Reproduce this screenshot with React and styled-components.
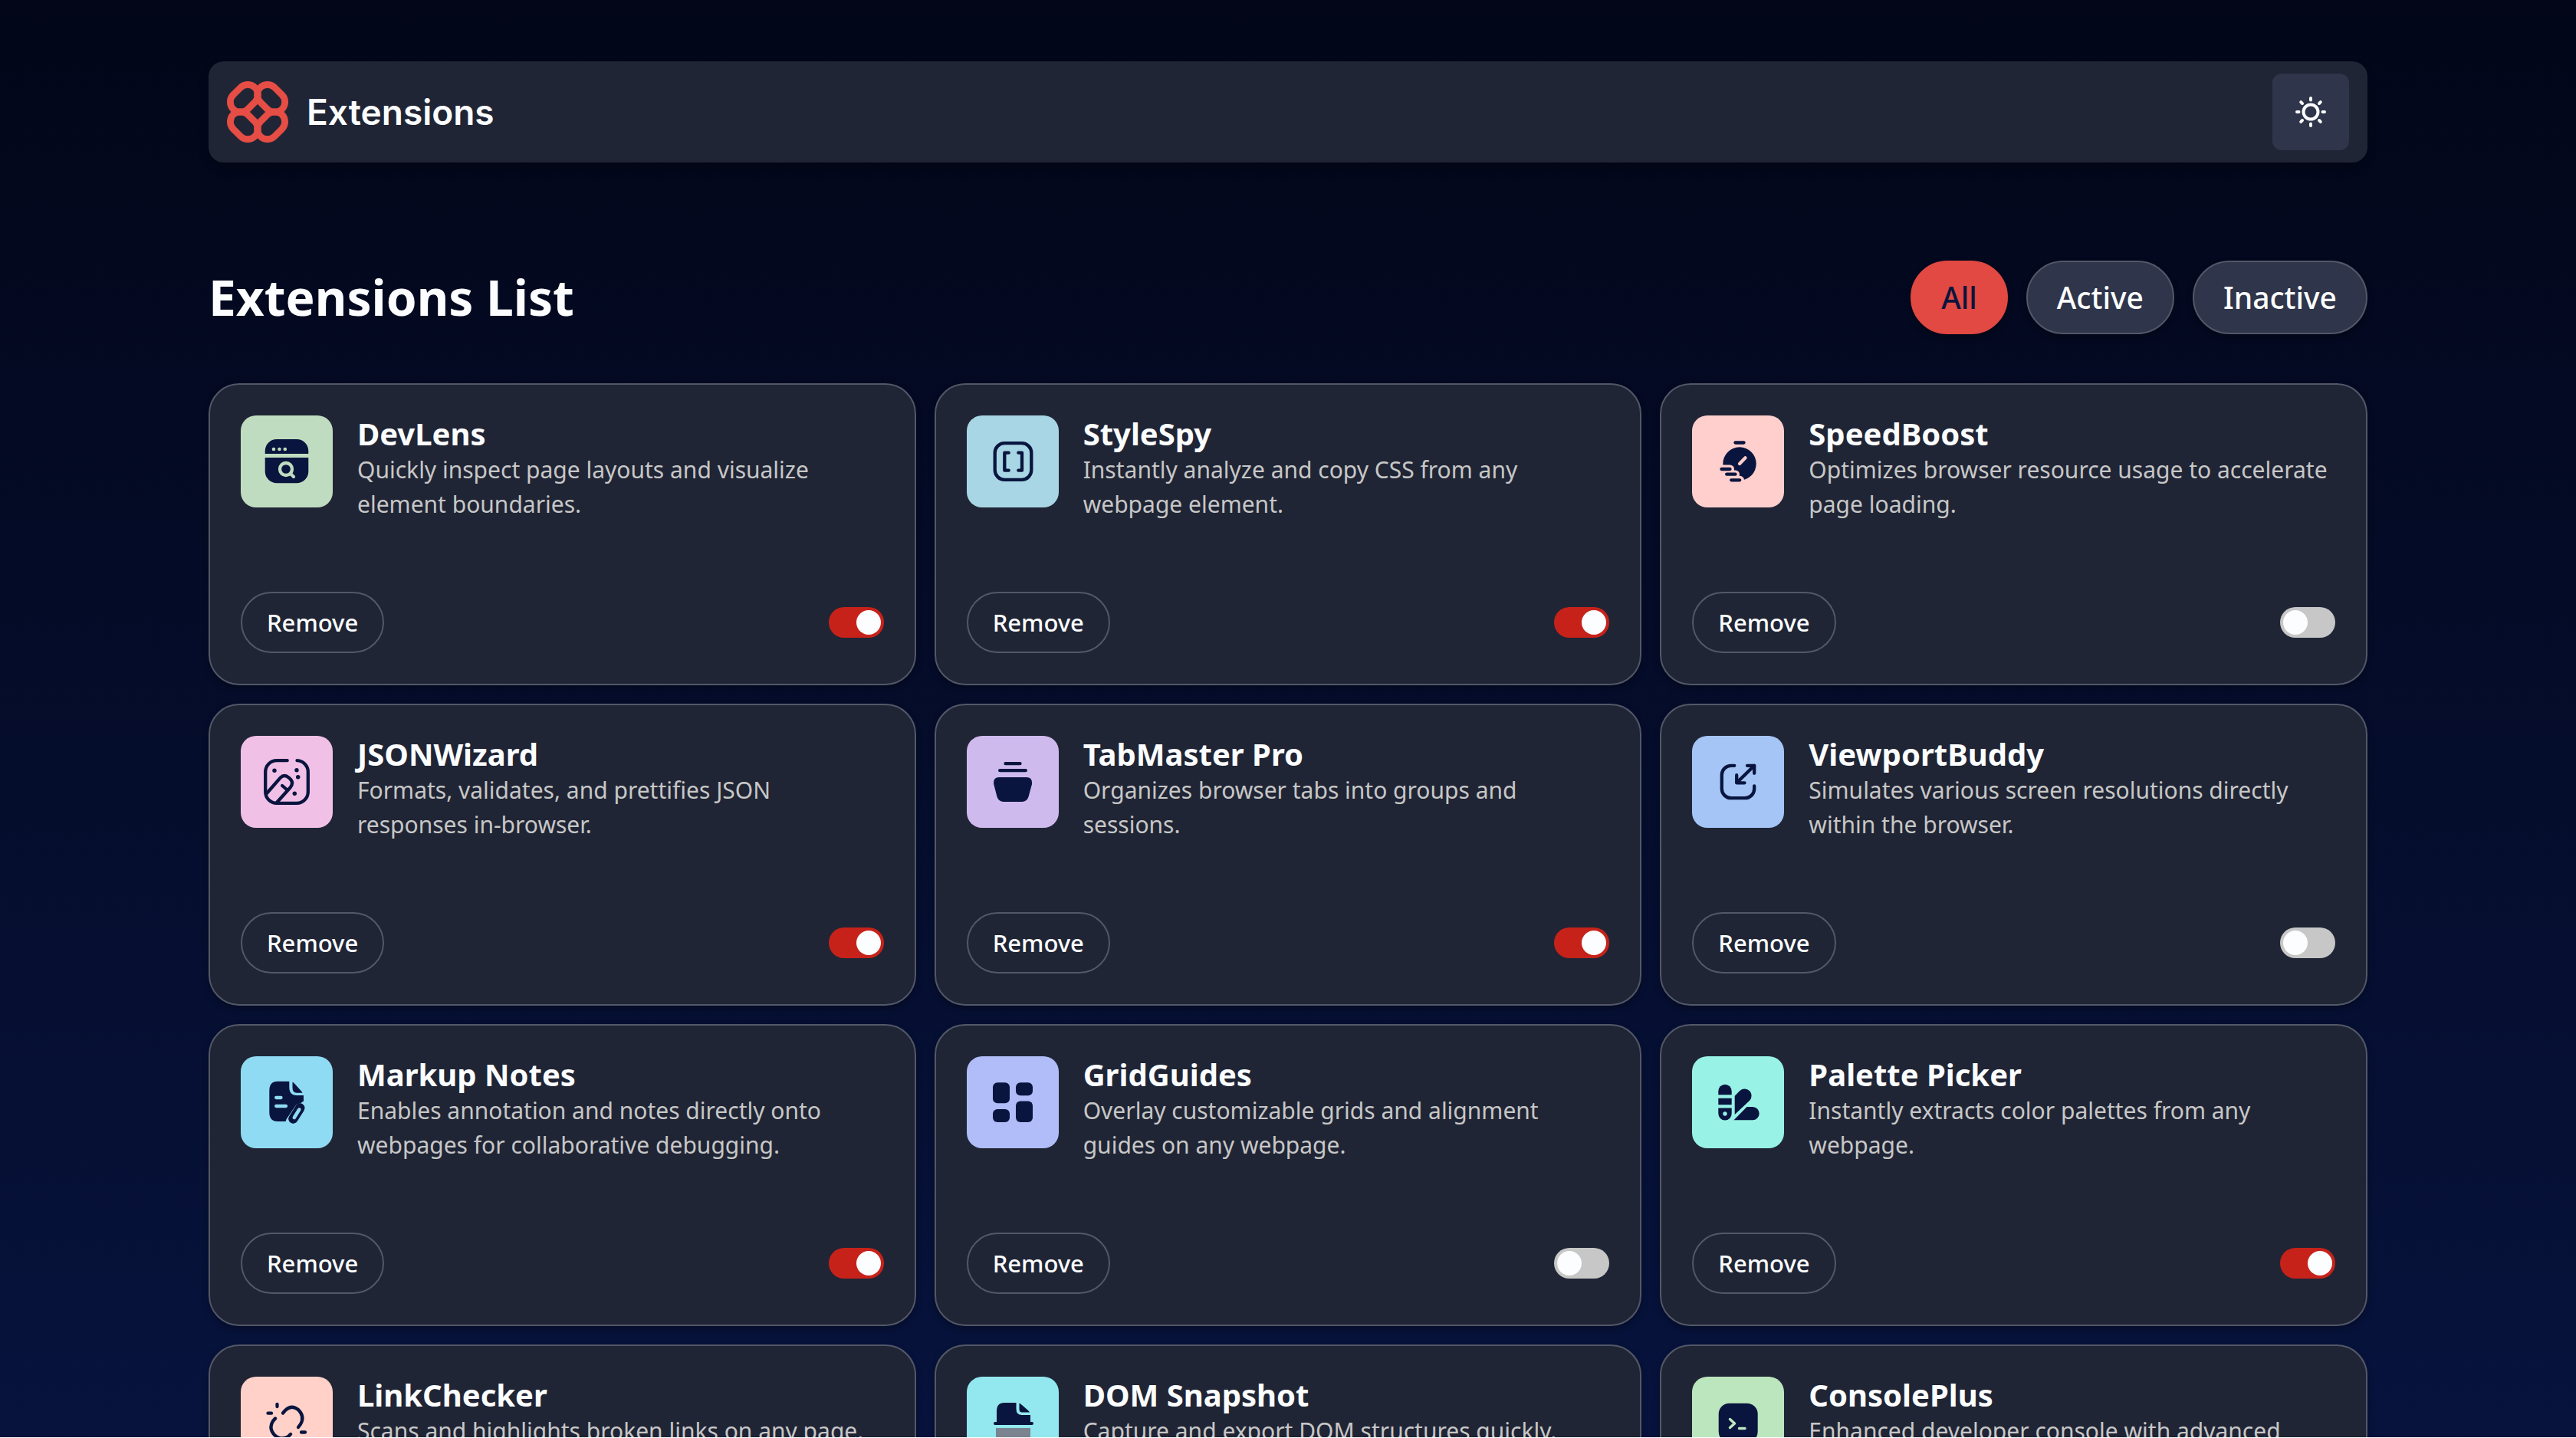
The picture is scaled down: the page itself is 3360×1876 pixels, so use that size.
import { useState } from 'react';
import styled, { createGlobalStyle, css } from 'styled-components';

const NAVY = '#09153e';

const GlobalStyle = createGlobalStyle`
  *, *::before, *::after {
    box-sizing: border-box;
  }
  html {
    background: #ffffff;
  }
  body {
    margin: 0;
    font-family: 'Noto Sans', 'Open Sans', sans-serif;
    color: #fbfdfe;
  }
  h1, h2, p, ul {
    margin: 0;
    padding: 0;
  }
  button {
    font-family: inherit;
    cursor: pointer;
  }
`;

/* ---------- icons, all drawn on a 120 grid ---------- */

const line = {
  fill: 'none',
  stroke: NAVY,
  strokeWidth: 4.3,
  strokeLinecap: 'round',
  strokeLinejoin: 'round',
};

const icons = {
  devLens: (bg) => (
    <>
      <path fill={NAVY} d="M47 31H73A15.300 15.300 0 0 1 88.300 46.300V50H31.700V46.300A15.300 15.300 0 0 1 47 31Z" />
      <path fill={NAVY} d="M31.700 55H88.300V73A15.300 15.300 0 0 1 73 88.300H47A15.300 15.300 0 0 1 31.700 73Z" />
      <circle cx="43" cy="44" r="2.300" fill={bg} />
      <circle cx="50.400" cy="44" r="2.300" fill={bg} />
      <circle cx="57.800" cy="44" r="2.300" fill={bg} />
      <circle cx="59" cy="70" r="8" {...line} stroke={bg} />
      <path d="M65 76L69 80" {...line} stroke={bg} />
    </>
  ),
  styleSpy: () => (
    <>
      <rect x="36.700" y="36.200" width="47.600" height="47.600" rx="12.500" {...line} />
      <path d="M54.700 48.700H49.300V71.700H54.700M67.300 48.700H72V71.700H67.300" {...line} />
    </>
  ),
  speedBoost: (bg) => (
    <>
      <path d="M56.500 35.500H67.500" {...line} />
      <circle cx="62" cy="63" r="21.700" fill={NAVY} />
      <path d="M62 63L69.500 55.300" {...line} stroke={bg} />
      <path d="M30 70H49.500M30 77H56.500M30 84.300H62.500" {...line} stroke={bg} strokeWidth="11" />
      <path d="M38.500 70H49.500M45.200 76.700H56.500M51.200 84.300H62.200" {...line} />
    </>
  ),
  jsonWizard: () => (
    <>
      <path d="M60.700 32.200H47A14.800 14.800 0 0 0 32.200 47V73A14.800 14.800 0 0 0 47 87.800H73A14.800 14.800 0 0 0 87.800 73V47A14.800 14.800 0 0 0 73.500 32.200" {...line} />
      <path d="M33.500 75.500L51.500 54.800Q57 49.500 62.500 54.300L64.800 56.500Q69.500 61.500 64.500 67.500L47 87M54.200 65L60.500 70.500" {...line} />
      <circle cx="44" cy="45.300" r="2.700" fill={NAVY} />
      <circle cx="73" cy="44.700" r="2.700" fill={NAVY} />
      <circle cx="74.700" cy="53.700" r="2.700" fill={NAVY} />
      <circle cx="70.300" cy="75.300" r="2.700" fill={NAVY} />
    </>
  ),
  tabMaster: () => (
    <>
      <path d="M50.500 36.200H69.500M43.200 45.200H76.800" {...line} />
      <path fill={NAVY} d="M42.500 54H77.500Q86 54 85 63L80.500 79.500Q78.500 86 72 86H48Q41.500 86 39.500 79.500L35.200 63Q34 54 42.500 54Z" />
    </>
  ),
  viewport: () => (
    <>
      <path d="M55.300 38.800H51A12.200 12.200 0 0 0 38.800 51V69A12.200 12.200 0 0 0 51 81.200H69A12.200 12.200 0 0 0 81.200 69V65.500" {...line} />
      <path d="M58.200 61.300L81.200 38.800M72 38.800H81.200V48.800M58.200 51.200V61.300H68.500" {...line} />
    </>
  ),
  markup: (bg) => (
    <>
      <path fill={NAVY} d="M48 32.700H63.300V40Q63.300 51 73 51H82V85H48Q37.300 85 37.300 73V45Q37.300 32.700 48 32.700Z" />
      <path fill={NAVY} d="M67.500 33.500Q69 34 70.500 36L79.500 46Q80.500 47.500 80.500 47.700H73Q67.500 47.700 67.500 41Z" />
      <path d="M46.200 54H52.500M46.200 65H59" {...line} stroke={bg} />
      <path d="M77.500 69L66 86H84V66" stroke={bg} strokeWidth="15" strokeLinecap="round" strokeLinejoin="round" fill={bg} />
      <path d="M77.300 67.500L68.500 81.500" {...line} strokeWidth="12.500" />
      <path d="M76.300 69.500L69.800 80" {...line} stroke={bg} strokeWidth="4.500" />
    </>
  ),
  gridGuides: () => (
    <g fill={NAVY}>
      <rect x="34" y="34.300" width="22" height="27" rx="6" />
      <rect x="64" y="34.300" width="22" height="17" rx="6" />
      <rect x="34" y="69" width="22" height="17" rx="6" />
      <rect x="64" y="58.500" width="22" height="27.500" rx="6" />
    </g>
  ),
  palette: (bg) => (
    <g fill={NAVY}>
      <path d="M34.300 50.300V45.400A8.700 8.700 0 0 1 51.700 45.400V50.300Z" />
      <path d="M34.300 54.700H51.700V63.300H34.300Z" />
      <path d="M34.300 67.500H51.700V74.800A8.700 8.700 0 0 1 34.300 74.800Z" />
      <circle cx="43" cy="75" r="2.700" fill={bg} />
      <path d="M55.700 51.700L62.600 44.800A9 9 0 0 1 75.400 57.400L55.700 76Z" />
      <path d="M54.500 83.300L71.500 66H79A8.650 8.650 0 0 1 79 83.300Z" />
    </g>
  ),
  linkChecker: () => (
    <>
      <path d="M55 47.500L58 44Q66 36 75 43Q84 52 78 62L75 66" {...line} />
      <path d="M45 54.500L42 58Q36 67 44 76Q53 84 62 78L65 75" {...line} />
      <path d="M47.500 36V39M35.500 47.700H40M72.500 81V84M79 72.500H84" {...line} />
    </>
  ),
  domSnapshot: () => (
    <>
      <path fill={NAVY} d="M49 34H64.500V42Q64.500 50 72 50H83V59H85Q87 59 87 61Q87 63 85 63H37Q35 63 35 61Q35 59 37 59H39V45Q39 34 49 34Z" />
      <path fill={NAVY} d="M68.500 34.500Q70 35 72 37L80 44Q82 46 82 46.500H72Q68.500 46.500 68.500 42Z" />
      <path fill="#7b8290" d="M38 67H83V76Q83 87 72 87H49Q38 87 38 76Z" />
    </>
  ),
  consolePlus: (bg) => (
    <>
      <rect x="34.700" y="34.700" width="51" height="51" rx="14" fill={NAVY} />
      <path d="M49.500 55.500L55.500 61L49.500 66.500M61.500 67.500H69" {...line} stroke={bg} strokeWidth="3.500" />
    </>
  ),
};

const initialExtensions = [
  { id: 'devLens', name: 'DevLens', color: '#c0dcc0', isActive: true, description: 'Quickly inspect page layouts and visualize element boundaries.' },
  { id: 'styleSpy', name: 'StyleSpy', color: '#a9d6e5', isActive: true, description: 'Instantly analyze and copy CSS from any webpage element.' },
  { id: 'speedBoost', name: 'SpeedBoost', color: '#ffcfcd', isActive: false, description: 'Optimizes browser resource usage to accelerate page loading.' },
  { id: 'jsonWizard', name: 'JSONWizard', color: '#f1c0e6', isActive: true, description: 'Formats, validates, and prettifies JSON responses in-browser.' },
  { id: 'tabMaster', name: 'TabMaster Pro', color: '#cfbaee', isActive: true, description: 'Organizes browser tabs into groups and sessions.' },
  { id: 'viewport', name: 'ViewportBuddy', color: '#a5c5f6', isActive: false, description: 'Simulates various screen resolutions directly within the browser.' },
  { id: 'markup', name: 'Markup Notes', color: '#90dbf4', isActive: true, description: 'Enables annotation and notes directly onto webpages for collaborative debugging.' },
  { id: 'gridGuides', name: 'GridGuides', color: '#b0bdf8', isActive: false, description: 'Overlay customizable grids and alignment guides on any webpage.' },
  { id: 'palette', name: 'Palette Picker', color: '#98f2e6', isActive: true, description: 'Instantly extracts color palettes from any webpage.' },
  { id: 'linkChecker', name: 'LinkChecker', color: '#ffd1c8', isActive: true, description: 'Scans and highlights broken links on any page.' },
  { id: 'domSnapshot', name: 'DOM Snapshot', color: '#92e8ee', isActive: false, description: 'Capture and export DOM structures quickly.' },
  { id: 'consolePlus', name: 'ConsolePlus', color: '#bce6be', isActive: true, description: 'Enhanced developer console with advanced filtering and logging.' },
];

const filters = ['All', 'Active', 'Inactive'];

function LogoMark() {
  const petal = <rect x="-20" y="-13.300" width="40" height="26.600" rx="13.300" />;
  return (
    <svg width="80" height="80" viewBox="0 0 80 80" aria-hidden="true">
      <g fill="none" stroke="#e54d45" strokeWidth="8.800">
        <g transform="translate(22.400 22.400) rotate(-45)">{petal}</g>
        <g transform="translate(57.600 22.400) rotate(45)">{petal}</g>
        <g transform="translate(22.400 57.600) rotate(45)">{petal}</g>
        <g transform="translate(57.600 57.600) rotate(-45)">{petal}</g>
      </g>
    </svg>
  );
}

function SunIcon() {
  return (
    <svg width="44" height="44" viewBox="-22 -22 44 44" aria-hidden="true">
      <g fill="none" stroke="#fbfdfe" strokeWidth="4" strokeLinecap="round">
        <circle r="9.500" />
        <path d="M0 -18V-15.500M0 18V15.500M-18 0H-15.500M18 0H15.500M-12.800 -12.800L-11 -11M12.800 -12.800L11 -11M-12.800 12.800L-11 11M12.800 12.800L11 11" />
      </g>
    </svg>
  );
}

function ExtensionCard({ extension, onRemove, onToggle }) {
  const { id, name, color, description, isActive } = extension;
  return (
    <Card>
      <CardTop>
        <IconTile $color={color}>
          <svg width="120" height="120" viewBox="0 0 120 120" aria-hidden="true">
            {icons[id](color)}
          </svg>
        </IconTile>
        <CardText>
          <CardTitle>{name}</CardTitle>
          <Description>{description}</Description>
        </CardText>
      </CardTop>
      <CardBottom>
        <RemoveButton type="button" onClick={() => onRemove(id)}>Remove</RemoveButton>
        <Toggle checked={isActive} onChange={() => onToggle(id)} aria-label={`Enable ${name}`} />
      </CardBottom>
    </Card>
  );
}

function App() {
  const [extensions, setExtensions] = useState(initialExtensions);
  const [filter, setFilter] = useState('All');

  const handleRemove = (id) => setExtensions(extensions.filter((item) => item.id !== id));

  const handleToggle = (id) => {
    setExtensions(extensions.map((item) => (item.id === id ? { ...item, isActive: !item.isActive } : item)));
  };

  const visible = extensions.filter((item) => {
    if (filter === 'All') return true;
    return filter === 'Active' ? item.isActive : !item.isActive;
  });

  return (
    <>
      <GlobalStyle />
      <Page>
        <Container>
          <Header>
            <Brand>
              <LogoMark />
              <span>Extensions</span>
            </Brand>
            <ThemeButton type="button" aria-label="Switch to light theme">
              <SunIcon />
            </ThemeButton>
          </Header>
          <main>
            <ListHeader>
              <ListTitle>Extensions List</ListTitle>
              <Filters>
                {filters.map((name) => (
                  <FilterButton key={name} type="button" $selected={filter === name} aria-pressed={filter === name} onClick={() => setFilter(name)}>
                    {name}
                  </FilterButton>
                ))}
              </Filters>
            </ListHeader>
            <Grid>
              {visible.map((item) => (
                <ExtensionCard key={item.id} extension={item} onRemove={handleRemove} onToggle={handleToggle} />
              ))}
            </Grid>
          </main>
        </Container>
      </Page>
    </>
  );
}

export default App;

const Page = styled.div`
  height: calc(100vh - 1px);
  padding: 80px 64px;
  background: linear-gradient(180deg, #020618 0%, #07133d 100%);
`;

const Container = styled.div`
  max-width: 2816px;
  margin: 0 auto;
`;

const Header = styled.header`
  display: flex;
  align-items: center;
  justify-content: space-between;
  padding: 16px 24px;
  border-radius: 20px;
  background: #202535;
  box-shadow: 0 8px 12px rgba(0, 0, 0, 0.3);
`;

const Brand = styled.div`
  display: flex;
  align-items: center;
  gap: 24px;
  font-family: Inter, 'Noto Sans', sans-serif;
  font-size: 46px;
  font-weight: 600;
  line-height: 56px;
`;

const ThemeButton = styled.button`
  display: flex;
  align-items: center;
  justify-content: center;
  width: 100px;
  height: 100px;
  padding: 0;
  border: 0;
  border-radius: 12px;
  background: #2f354a;
`;

const ListHeader = styled.div`
  display: flex;
  flex-wrap: wrap;
  align-items: center;
  justify-content: space-between;
  gap: 24px;
  padding: 128px 0 64px;
`;

const ListTitle = styled.h1`
  font-size: 64px;
  font-weight: 700;
  line-height: 96px;
`;

const Filters = styled.div`
  display: flex;
  gap: 24px;
`;

const FilterButton = styled.button`
  padding: 18px 38px;
  border: 2px solid #535868;
  border-radius: 48px;
  background: #2f354a;
  color: #fbfdfe;
  font-size: 39px;
  font-weight: 500;
  line-height: 56px;
  box-shadow: 0 4px 8px rgba(0, 0, 0, 0.3);

  ${({ $selected }) => $selected && css`
    border-color: #e14942;
    background: #e14942;
    color: ${NAVY};
  `}
`;

const Grid = styled.ul`
  display: grid;
  grid-template-columns: repeat(auto-fill, minmax(800px, 1fr));
  gap: 24px;
  list-style: none;
`;

const Card = styled.li`
  display: flex;
  flex-direction: column;
  justify-content: space-between;
  gap: 40px;
  min-height: 394px;
  padding: 40px;
  border: 2px solid #535868;
  border-radius: 40px;
  background: #202535;
  box-shadow: 0 4px 8px rgba(0, 0, 0, 0.3);
`;

const CardTop = styled.div`
  display: flex;
  align-items: flex-start;
  gap: 32px;
`;

const IconTile = styled.div`
  flex: none;
  width: 120px;
  height: 120px;
  border-radius: 20px;
  overflow: hidden;
  background: ${({ $color }) => $color};
`;

const CardText = styled.div`
  flex: 1;
  min-width: 0;
`;

const CardTitle = styled.h2`
  font-size: 40px;
  font-weight: 700;
  line-height: 48px;
`;

const Description = styled.p`
  color: #c7c7c7;
  font-size: 30px;
  line-height: 45px;
`;

const CardBottom = styled.div`
  display: flex;
  align-items: center;
  justify-content: space-between;
`;

const RemoveButton = styled.button`
  padding: 16px 32px;
  border: 2px solid #535868;
  border-radius: 40px;
  background: transparent;
  color: #fbfdfe;
  font-size: 31px;
  font-weight: 500;
  line-height: 44px;
`;

const Toggle = styled.input.attrs({ type: 'checkbox', role: 'switch' })`
  display: flex;
  align-items: center;
  appearance: none;
  width: 72px;
  height: 40px;
  margin: 0;
  padding: 4px;
  border-radius: 20px;
  background: #c7c7c7;
  cursor: pointer;

  &::before {
    content: '';
    width: 32px;
    height: 32px;
    border-radius: 50%;
    background: #fbfdfe;
  }

  &:checked {
    justify-content: flex-end;
    background: #c7221a;
  }
`;
